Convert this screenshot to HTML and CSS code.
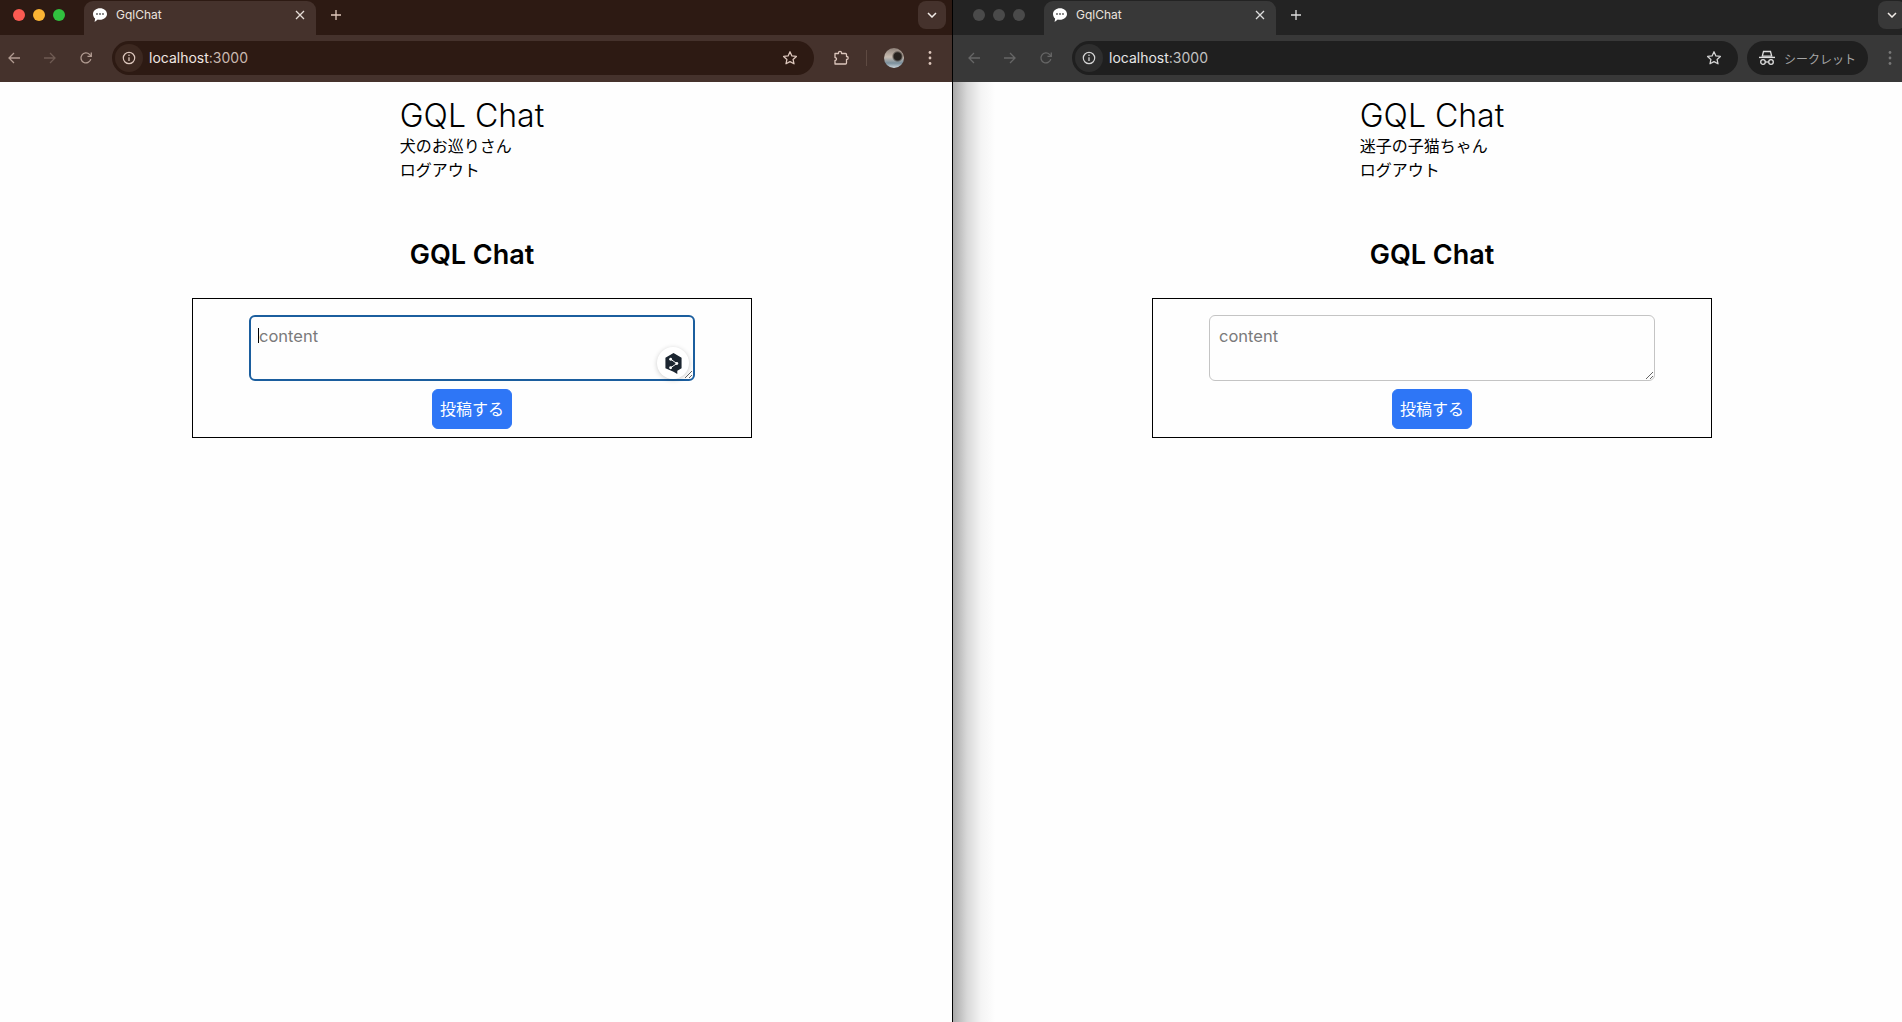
FILE: index.html
```html
<!DOCTYPE html>
<html lang="ja">
<head>
<meta charset="utf-8">
<title>GqlChat</title>
<link rel="stylesheet" href="styles.css">
</head>
<body>
<svg class="defs" width="0" height="0" aria-hidden="true">
  <defs>
    <symbol id="i-bubble" viewBox="0 0 16 16"><path d="M8 1.200c3.900 0 7 2.600 7 5.800s-3.100 5.800-7 5.800c-.8 0-1.500-.1-2.200-.3L2.600 15l.5-3.400C1.800 10.500 1 8.900 1 7c0-3.200 3.100-5.800 7-5.800z" fill="#fff"/><circle cx="5" cy="7" r=".9" fill="#555"/><circle cx="8" cy="7" r=".9" fill="#555"/><circle cx="11" cy="7" r=".9" fill="#555"/></symbol>
    <symbol id="i-close" viewBox="0 0 12 12"><path d="M2 2l8 8M10 2l-8 8" stroke="currentColor" stroke-width="1.300" fill="none"/></symbol>
    <symbol id="i-plus" viewBox="0 0 12 12"><path d="M6 1v10M1 6h10" stroke="currentColor" stroke-width="1.300" fill="none"/></symbol>
    <symbol id="i-back" viewBox="0 0 14 14"><path d="M13 7H2M7 2L2 7l5 5" stroke="currentColor" stroke-width="1.300" fill="none"/></symbol>
    <symbol id="i-forward" viewBox="0 0 14 14"><path d="M1 7h11M7 2l5 5-5 5" stroke="currentColor" stroke-width="1.300" fill="none"/></symbol>
    <symbol id="i-reload" viewBox="0 0 14 14"><path d="M11.800 8.200A5 5 0 1 1 10.500 3.400L12 5" stroke="currentColor" stroke-width="1.300" fill="none"/><path d="M12.300 1.500V5.300H8.500" stroke="currentColor" stroke-width="1.300" fill="none"/></symbol>
    <symbol id="i-info" viewBox="0 0 14 14"><circle cx="7" cy="7" r="5.700" stroke="currentColor" stroke-width="1.200" fill="none"/><path d="M7 6.300v3.600" stroke="currentColor" stroke-width="1.300"/><circle cx="7" cy="4.300" r=".8" fill="currentColor"/></symbol>
    <symbol id="i-star" viewBox="0 0 16 16"><path d="M8 1.800l1.900 4.100 4.500.5-3.300 3 .9 4.400L8 11.600l-4 2.200.9-4.400-3.300-3 4.500-.5z" stroke="currentColor" stroke-width="1.300" fill="none" stroke-linejoin="round"/></symbol>
    <symbol id="i-ext" viewBox="0 0 16 16"><path d="M2 3.500h3.500v-.7a1.500 1.500 0 0 1 3 0v.7h4a1 1 0 0 1 1 1v2h.2a1.500 1.500 0 0 1 0 3h-.2v3.500a1 1 0 0 1-1 1H2v-3.500a1.500 1.500 0 0 0 0-3z" stroke="currentColor" stroke-width="1.300" fill="none" stroke-linejoin="round"/></symbol>
    <symbol id="i-chevron" viewBox="0 0 10 6"><path d="M1 1l4 4 4-4" stroke="currentColor" stroke-width="1.500" fill="none"/></symbol>
    <symbol id="i-kebab" viewBox="0 0 4 16"><circle cx="2" cy="2.500" r="1.400" fill="currentColor"/><circle cx="2" cy="8" r="1.400" fill="currentColor"/><circle cx="2" cy="13.500" r="1.400" fill="currentColor"/></symbol>
    <symbol id="i-incognito" viewBox="0 0 18 16"><path d="M5.500 1.500h7l1.200 4.700H4.300z" stroke="currentColor" stroke-width="1.300" fill="none"/><path d="M1 7.400h16" stroke="currentColor" stroke-width="1.400"/><circle cx="5" cy="12" r="2.300" stroke="currentColor" stroke-width="1.300" fill="none"/><circle cx="13" cy="12" r="2.300" stroke="currentColor" stroke-width="1.300" fill="none"/><path d="M7.400 12h3.200" stroke="currentColor" stroke-width="1.300"/></symbol>
  </defs>
</svg>

<div class="screen">
  <section class="window window-normal">
    <div class="tabstrip">
      <div class="lights">
        <span class="light light-red"></span>
        <span class="light light-yellow"></span>
        <span class="light light-green"></span>
      </div>
      <div class="tab">
        <svg class="favicon"><use href="#i-bubble"/></svg>
        <span class="tab-title">GqlChat</span>
        <svg class="tab-close"><use href="#i-close"/></svg>
      </div>
      <svg class="new-tab"><use href="#i-plus"/></svg>
      <div class="tab-search"><svg class="chevron"><use href="#i-chevron"/></svg></div>
    </div>
    <div class="toolbar">
      <div class="nav">
        <span class="nav-btn back"><svg class="nav-icon"><use href="#i-back"/></svg></span>
        <span class="nav-btn forward"><svg class="nav-icon"><use href="#i-forward"/></svg></span>
        <span class="nav-btn reload"><svg class="nav-icon"><use href="#i-reload"/></svg></span>
      </div>
      <div class="omnibox">
        <span class="site-info"><svg class="info-icon"><use href="#i-info"/></svg></span>
        <span class="url">localhost<span class="port">:3000</span></span>
        <svg class="star"><use href="#i-star"/></svg>
      </div>
      <svg class="ext"><use href="#i-ext"/></svg>
      <span class="sep"></span>
      <span class="avatar"></span>
      <svg class="kebab"><use href="#i-kebab"/></svg>
    </div>
    <main class="page">
      <div class="content">
        <header class="site-header">
          <div class="site-title">GQL Chat</div>
          <div class="site-line">犬のお巡りさん</div>
          <div class="site-line">ログアウト</div>
        </header>
        <h1 class="heading">GQL Chat</h1>
        <form class="card">
          <div class="field">
            <textarea class="input input-focus" placeholder="content"></textarea>
            <span class="caret"></span>
            <span class="badge">
              <svg class="badge-icon" viewBox="0 0 20 24">
                <path d="M10 1l8.500 5v11l-4.500 2.600V23l-4-2.200-8.500-3.800V6z" fill="#1b2530"/>
                <path d="M7 7.500l6.500 4.500L7 16.500" stroke="#fff" stroke-width="1" fill="none"/>
                <circle cx="7" cy="7.500" r="1.500" fill="#fff"/><circle cx="13.500" cy="12" r="1.500" fill="#fff"/><circle cx="7" cy="16.500" r="1.500" fill="#fff"/>
              </svg>
            </span>
          </div>
          <button type="button" class="submit">投稿する</button>
        </form>
      </div>
    </main>
  </section>

  <div class="divider"></div>

  <section class="window window-incognito">
    <div class="tabstrip">
      <div class="lights">
        <span class="light"></span>
        <span class="light"></span>
        <span class="light"></span>
      </div>
      <div class="tab">
        <svg class="favicon"><use href="#i-bubble"/></svg>
        <span class="tab-title">GqlChat</span>
        <svg class="tab-close"><use href="#i-close"/></svg>
      </div>
      <svg class="new-tab"><use href="#i-plus"/></svg>
      <div class="tab-search"><svg class="chevron"><use href="#i-chevron"/></svg></div>
    </div>
    <div class="toolbar">
      <div class="nav">
        <span class="nav-btn back"><svg class="nav-icon"><use href="#i-back"/></svg></span>
        <span class="nav-btn forward"><svg class="nav-icon"><use href="#i-forward"/></svg></span>
        <span class="nav-btn reload"><svg class="nav-icon"><use href="#i-reload"/></svg></span>
      </div>
      <div class="omnibox">
        <span class="site-info"><svg class="info-icon"><use href="#i-info"/></svg></span>
        <span class="url">localhost<span class="port">:3000</span></span>
        <svg class="star"><use href="#i-star"/></svg>
      </div>
      <div class="incognito-pill">
        <svg class="incognito-icon"><use href="#i-incognito"/></svg>
        <span class="incognito-label">シークレット</span>
      </div>
      <svg class="kebab"><use href="#i-kebab"/></svg>
    </div>
    <main class="page">
      <div class="content">
        <header class="site-header">
          <div class="site-title">GQL Chat</div>
          <div class="site-line">迷子の子猫ちゃん</div>
          <div class="site-line">ログアウト</div>
        </header>
        <h1 class="heading">GQL Chat</h1>
        <form class="card">
          <div class="field">
            <textarea class="input" placeholder="content"></textarea>
          </div>
          <button type="button" class="submit">投稿する</button>
        </form>
      </div>
    </main>
  </section>
</div>
</body>
</html>
```

FILE: styles.css
```css
* { box-sizing: border-box; }

html, body {
  margin: 0;
  height: 100%;
  overflow: hidden;
  background: #fefefe;
}

body {
  font-family: Inter, "Noto Sans CJK JP", sans-serif;
  color: #000;
}

.defs { position: absolute; }

.screen {
  display: flex;
  width: 1902px;
  height: 1022px;
  overflow: hidden;
}

.window {
  display: flex;
  flex-direction: column;
  min-width: 0;
  overflow: hidden;
}

.window-normal {
  width: 952px;
  flex: none;
  --strip: #2d1a13;
  --bar: #45322c;
  --omni: #2d1a13;
  --icon: #dcc6bc;
  --icon-dim: #b19b91;
  --icon-off: #6f5b53;
  --url: #f0e6e1;
  --port: #c9b8b0;
  --chip: #45322c;
  --info-bg: #3c2820;
  --search: #45322c;
  --inset: 0px;
}

.window-incognito {
  flex: 1;
  --strip: #232323;
  --bar: #383838;
  --omni: #1f1f1f;
  --icon: #d4d4d4;
  --icon-dim: #666;
  --icon-off: #666;
  --url: #e6e6e6;
  --port: #c2c2c2;
  --info-bg: #2e2e2e;
  --search: #383838;
  --inset: 7px;
}

.divider {
  width: 1px;
  flex: none;
  background: #000;
}

/* tab strip */
.tabstrip {
  display: flex;
  align-items: flex-start;
  height: 35px;
  flex: none;
  padding-left: var(--inset);
  background: var(--strip);
  position: relative;
}

.lights {
  display: flex;
  gap: 8px;
  width: 84px;
  flex: none;
  padding: 9px 0 0 13px;
}

.light {
  width: 12px;
  height: 12px;
  border-radius: 50%;
  background: #4a4a4a;
}

.light-red { background: #fb5b52; }
.light-yellow { background: #fbb434; }
.light-green { background: #31c13f; }

.tab {
  display: flex;
  align-items: center;
  width: 232px;
  height: 34px;
  flex: none;
  margin-top: 1px;
  padding: 0 10px 7px 8px;
  background: var(--bar);
  border-radius: 9px 9px 0 0;
}

.favicon { width: 16px; height: 16px; flex: none; }

.tab-title {
  flex: 1;
  margin-left: 8px;
  font-size: 12px;
  color: #ebe3df;
}

.tab-close { width: 12px; height: 12px; color: #e6dcd7; flex: none; }
.window-incognito .tab-close { color: #ddd; }

.new-tab {
  width: 12px;
  height: 12px;
  flex: none;
  margin: 9px 0 0 14px;
  color: #e0c8bc;
}
.window-incognito .new-tab { color: #ddd; }

.tab-search {
  display: flex;
  align-items: center;
  justify-content: center;
  width: 28px;
  height: 28px;
  flex: none;
  margin: 1px 6px 0 auto;
  border-radius: 8px;
  background: var(--search);
}
.window-incognito .tab-search { margin-right: -4px; }

.chevron { width: 10px; height: 6px; color: #f2ece8; }

/* toolbar */
.toolbar {
  display: flex;
  align-items: center;
  height: 47px;
  flex: none;
  padding: 0 0 1px var(--inset);
  background: var(--bar);
}

.nav { display: flex; flex: none; margin-left: -4px; }

.nav-btn {
  display: flex;
  align-items: center;
  justify-content: center;
  width: 36px;
  height: 34px;
}

.nav-icon { width: 14px; height: 14px; }
.back { color: var(--icon-dim); }
.forward { color: var(--icon-off); }
.reload { color: var(--icon-dim); }

.omnibox {
  display: flex;
  align-items: center;
  flex: 1;
  height: 34px;
  min-width: 0;
  margin-left: 8px;
  padding: 0 16px 0 3px;
  background: var(--omni);
  border-radius: 17px;
}

.site-info {
  display: flex;
  align-items: center;
  justify-content: center;
  width: 28px;
  height: 28px;
  flex: none;
  border-radius: 50%;
  background: var(--info-bg);
  color: var(--icon);
}

.info-icon { width: 14px; height: 14px; }

.url {
  flex: 1;
  margin-left: 6px;
  font-size: 14px;
  line-height: 16px;
  color: var(--url);
}

.port { color: var(--port); }

.star { width: 16px; height: 16px; flex: none; color: var(--icon); }

.ext { width: 16px; height: 16px; flex: none; margin-left: 19px; color: var(--icon); }

.sep {
  width: 1px;
  height: 16px;
  flex: none;
  margin-left: 17px;
  background: #5e4a42;
}

.avatar {
  width: 20px;
  height: 20px;
  flex: none;
  margin-left: 17px;
  border-radius: 50%;
  background:
    radial-gradient(circle at 68% 42%, #26211e 0 20%, transparent 32%),
    linear-gradient(to bottom, #8d8078 0, #c9bdb2 45%, #7a8f9c 75%, #cfd8de 100%);
}

.kebab { width: 4px; height: 16px; flex: none; margin: 0 20px 0 24px; color: var(--icon); }
.window-incognito .kebab { margin: 0 10px 0 20px; color: #777; }

.incognito-pill {
  display: flex;
  align-items: center;
  width: 121px;
  height: 34px;
  flex: none;
  margin-left: 9px;
  padding-left: 11px;
  border-radius: 17px;
  background: var(--omni);
}

.incognito-icon { width: 18px; height: 16px; flex: none; color: #dedede; }

.incognito-label {
  margin-left: 8px;
  font-size: 12px;
  color: #a5a5a5;
  white-space: nowrap;
}

/* page */
.page {
  flex: 1;
  min-height: 0;
  padding-left: var(--inset);
  background: #fefefe;
}

.window-incognito .page {
  background: linear-gradient(to right, #a9a9a9 0, #d8d8d8 14px, #f4f4f4 28px, #fefefe 42px);
}

.content {
  display: flex;
  flex-direction: column;
  align-items: center;
  width: 944px;
}

.site-header {
  margin-top: 15px;
}

.site-title {
  font-size: 32px;
  line-height: 37px;
  font-weight: 350;
}

.site-line {
  font-size: 16px;
  line-height: 24px;
}

.heading {
  margin: 57px 0 0;
  font-size: 27px;
  line-height: 32px;
  font-weight: 600;
}

.card {
  display: flex;
  flex-direction: column;
  align-items: center;
  gap: 8px;
  width: 560px;
  height: 140px;
  margin-top: 27px;
  padding-top: 16px;
  border: 1px solid #000;
}

.field {
  position: relative;
  display: flex;
}

.input {
  display: block;
  width: 446px;
  height: 66px;
  padding: 10px 9px 8px;
  border: 1px solid #c4c4c4;
  border-radius: 6px;
  outline: none;
  background: #fefefe;
  font: 16.500px/20px Inter, "Noto Sans CJK JP", sans-serif;
}

.input::placeholder { color: #7a7a7a; opacity: 1; }

.input-focus {
  border: 2px solid #1b5e9e;
  padding: 9px 8px 7px;
}

.caret {
  position: absolute;
  left: 9px;
  top: 13px;
  width: 1px;
  height: 15px;
  background: #000;
}

.badge {
  position: absolute;
  right: 6px;
  bottom: 2px;
  display: flex;
  align-items: center;
  justify-content: center;
  width: 32px;
  height: 32px;
  border-radius: 50%;
  background: #fff;
  box-shadow: 0 1px 5px rgba(0, 0, 0, 0.2);
}

.badge-icon { width: 19px; height: 23px; }

.submit {
  width: 80px;
  height: 40px;
  padding: 0;
  border: 1px solid #2e76f6;
  border-radius: 6px;
  background: #2e76f6;
  color: #fff;
  font: 16px/24px Inter, "Noto Sans CJK JP", sans-serif;
}
```
